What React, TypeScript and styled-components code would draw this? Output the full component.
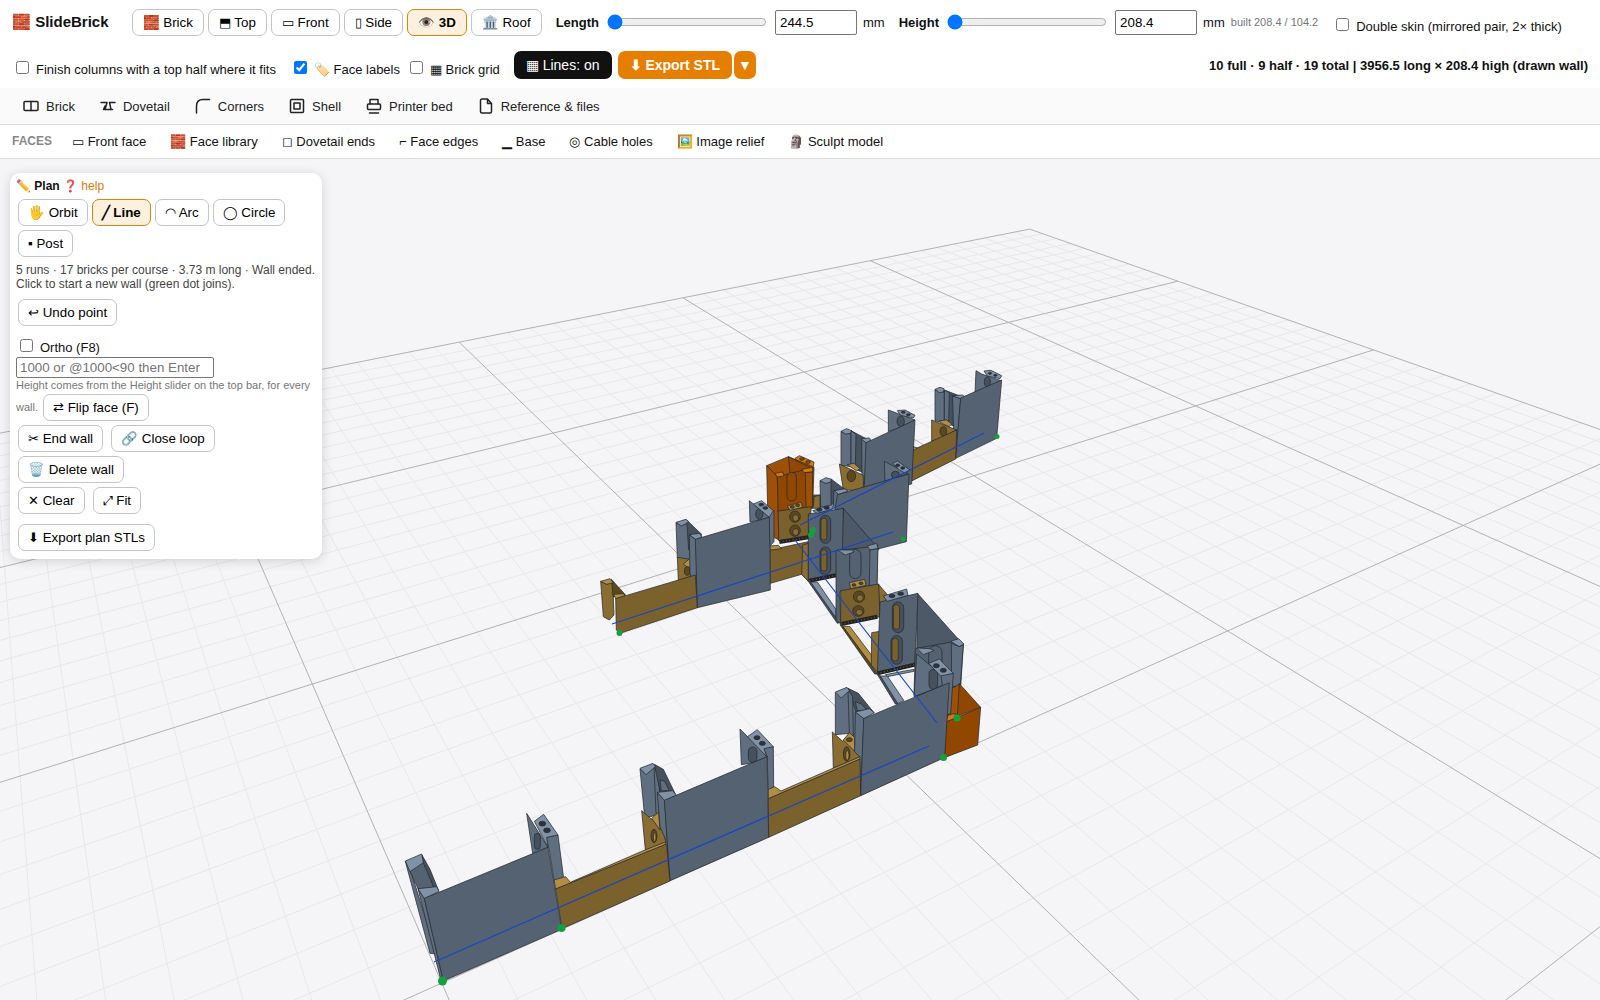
import React from "react";
import styled, { createGlobalStyle, css } from "styled-components";

const GlobalStyle = createGlobalStyle`
  * { box-sizing: border-box; }
  body {
    margin: 0;
    background: #f5f5f7;
    color: #111;
    font: 13px/15px "Liberation Sans", Arial, sans-serif;
  }
`;

const Page = styled.div`
  display: flex;
  flex-direction: column;
  min-height: 100vh;
`;

const Button = styled.button<{ $active?: boolean }>`
  height: 27px;
  padding: 0 9px;
  border: 1px solid #c4c4c4;
  border-radius: 7px;
  background: #fff;
  color: #000;
  font-family: inherit;
  font-size: 13.333px;
  white-space: nowrap;
  ${(p) =>
    p.$active &&
    css`
      border-color: #d9860f;
      background: #fdf0de;
      font-weight: bold;
    `}
`;

const TopBar = styled.header`
  display: flex;
  flex-wrap: wrap;
  align-items: center;
  gap: 15px 14px;
  padding: 8px 12px 9px;
  background: #fff;
  ${Button} { padding: 0 10px; }
`;

const Brand = styled.strong`
  margin-right: 9px;
  font-size: 15px;
  line-height: 20px;
`;

const Group = styled.div<{ $gap?: number }>`
  display: flex;
  align-items: center;
  gap: ${(p) => p.$gap ?? 6}px;
`;

const SolidButton = styled.button<{ $tone: string; $bold?: boolean; $narrow?: boolean }>`
  height: 28px;
  padding: 0 ${(p) => (p.$narrow ? 4 : 12)}px;
  border: 0;
  border-radius: 7px;
  background: ${(p) => p.$tone};
  color: #fff;
  font-family: inherit;
  font-size: 14px;
  font-weight: ${(p) => (p.$bold ? "bold" : "normal")};
  white-space: nowrap;
`;

const FieldLabel = styled.label`
  font-weight: bold;
`;

const Range = styled.input`
  width: 160px;
  height: 16px;
  margin: 0 2px;
`;

const NumberBox = styled.input`
  width: 82px;
  height: 25px;
  padding: 0 4px;
  border: 1px solid #767676;
  border-radius: 2px;
  font-family: inherit;
  font-size: 13.333px;
`;

const Built = styled.span`
  color: #777;
  font-size: 11px;
`;

const Check = styled.label`
  display: flex;
  align-items: flex-start;
  gap: 7px;
  padding-top: 10px;
  line-height: 18px;
  input {
    width: 13px;
    height: 13px;
    margin: 0 0 0 4px;
  }
`;

const Stats = styled.strong`
  margin-left: auto;
`;

const Sections = styled.nav`
  display: flex;
  align-items: center;
  gap: 25px;
  height: 37px;
  padding: 0 23px;
  border-bottom: 1px solid #ddd;
  background: #fafafa;
`;

const NavLink = styled.a`
  display: flex;
  align-items: center;
  gap: 7px;
  color: #222;
  text-decoration: none;
  svg {
    width: 16px;
    height: 16px;
    fill: none;
    stroke: #222;
    stroke-width: 1.5;
    stroke-linejoin: round;
    stroke-linecap: round;
  }
`;

const Faces = styled(Sections)`
  gap: 24px;
  height: 34px;
  padding: 0 12px;
  background: #fff;
  a { color: #111; }
`;

const FacesTitle = styled.span`
  margin-right: -4px;
  color: #888;
  font-size: 12px;
  font-weight: bold;
`;

const Viewport = styled.main`
  position: relative;
  flex: 1;
  overflow: hidden;
`;

const Scene = styled.svg`
  position: absolute;
  inset: 0;
  width: 100%;
  height: 100%;
`;

const Panel = styled.aside`
  position: absolute;
  top: 14px;
  left: 10px;
  width: 312px;
  padding: 6px;
  border-radius: 10px;
  background: #fff;
  box-shadow: 0 2px 12px rgba(0, 0, 0, 0.15);
`;

const PanelTitle = styled.div`
  margin-bottom: 6px;
  font-size: 12px;
  line-height: 14px;
  a { color: #d9790a; text-decoration: none; }
`;

const Tools = styled.div<{ $gap?: number; $after?: number }>`
  display: flex;
  flex-wrap: wrap;
  align-items: center;
  gap: 4px ${(p) => p.$gap ?? 4}px;
  margin-bottom: ${(p) => p.$after ?? 4}px;
  padding: 0 2px;
`;

const Status = styled.p`
  margin: 6px 0 8px;
  color: #444;
  font-size: 12px;
  line-height: 14px;
`;

const Command = styled.input`
  display: block;
  width: 198px;
  height: 21px;
  padding: 1px 3px;
  border: 1px solid #767676;
  border-radius: 2px;
  font-family: inherit;
  font-size: 13.333px;
`;

const Hint = styled.div`
  display: flex;
  flex-direction: column;
  gap: 1px;
  margin-bottom: 4px;
  color: #777;
  font-size: 11px;
  line-height: 15px;
`;

/* Ground plane: maps grid cells (u, v) to the view through the camera. */
const ground = (u: number, v: number): [number, number] => {
  const w = 1 - 0.07505 * u - 0.12089 * v;
  return [(1029.6 - 224.59 * u + 5.91 * v) / w, (229.1 + 12 * u + 18.1 * v) / w];
};
const gridPath = (major: boolean) => {
  let d = "";
  for (let i = 0; i <= 100; i++) {
    if ((i % 10 === 0) !== major) continue;
    const k = i / 10;
    const vEnd = Math.min(8, (0.95 - 0.07505 * k) / 0.12089);
    if (vEnd > 0) {
      const [a, b] = ground(k, 0);
      const [c, e] = ground(k, vEnd);
      d += `M${a.toFixed(1)} ${b.toFixed(1)}L${c.toFixed(1)} ${e.toFixed(1)}`;
    }
    const uEnd = Math.min(10, (0.95 - 0.12089 * k) / 0.07505);
    if (uEnd > 0) {
      const [a, b] = ground(0, k);
      const [c, e] = ground(uEnd, k);
      d += `M${a.toFixed(1)} ${b.toFixed(1)}L${c.toFixed(1)} ${e.toFixed(1)}`;
    }
  }
  return d;
};

const tones = {
  slate: "#556271",
  slateSide: "#5f6f80",
  slateShade: "#4d5966",
  slateLight: "#7f92a7",
  slateDark: "#46515d",
  ochre: "#7b612b",
  ochreSide: "#8b6d31",
  ochreLight: "#b28d42",
  ochreDark: "#5d481d",
  orange: "#914700",
  orangeSide: "#a05004",
  orangeLight: "#d8750c",
  ink: "#2c333b",
};
type Tone = keyof typeof tones;

const Shape = ({ t, p }: { t: Tone; p: string }) => <polygon fill={tones[t]} points={p} />;

const Block = ({ x, y, children }: { x: number; y: number; children: React.ReactNode }) => (
  <g transform={`translate(${x} ${y}) scale(0.33333)`} stroke="#252a30" strokeWidth="2.2" strokeLinejoin="round">
    {children}
  </g>
);

const Hole = ({ t, x, y, rx, ry }: { t: Tone; x: number; y: number; rx: number; ry: number }) => (
  <ellipse cx={x} cy={y} rx={rx} ry={ry} fill={tones[t]} />
);

const Slot = ({ x, y, w, h, t, inner }: { x: number; y: number; w: number; h: number; t: Tone; inner?: Tone }) => (
  <>
    <rect x={x - w / 2} y={y - h / 2} width={w} height={h} rx={w / 2} fill={tones[t]} />
    {inner && <rect x={x - w / 2 + 3} y={y - h / 2 + 8} width={w * 0.55} height={h - 18} rx={w / 4} fill={tones[inner]} />}
  </>
);

const Hatch = ({ x1, y1, x2, y2 }: { x1: number; y1: number; x2: number; y2: number }) => (
  <>
    <line x1={x1} y1={y1} x2={x2} y2={y2} stroke="#1f2123" strokeWidth="12" />
    <line x1={x1} y1={y1} x2={x2} y2={y2} stroke="#66593a" strokeWidth="4" strokeDasharray="3 7" />
  </>
);

const BackWall = () => (
  <Block x={780} y={360}>
    <Shape t="slateSide" p="588,32 605,42 663,62 640,80 585,100" />
    <Hole t="slateDark" x={622} y={66} rx={9} ry={16} />
    <Shape t="slateLight" p="612,33 633,31 665,47 660,56 622,48" />
    <Hole t="ink" x={630} y={40} rx={5} ry={3} />
    <Hole t="ink" x={646} y={46} rx={5} ry={3} />
    <Shape t="slateSide" p="465,88 478,98 495,94 495,190 465,182" />
    <Shape t="slateDark" p="493,90 550,112 525,200 493,185" />
    <Shape t="slateSide" p="493,90 508,98 506,185 493,185" />
    <Shape t="slateLight" p="465,88 480,82 492,86 490,96 478,98" />
    <Shape t="slateSide" p="518,108 542,116 527,295 520,200" />
    <Shape t="slateLight" p="515,107 548,105 555,111 542,116" />
    <Shape t="slate" p="542,114 665,60 650,235 527,295" />
    <Shape t="ochreSide" p="455,180 530,210 480,235 455,243" />
    <Hole t="ochreDark" x={490} y={214} rx={10} ry={14} />
    <Shape t="ochreLight" p="478,182 500,180 515,192 508,200 485,190" />
    <Shape t="ochre" p="398,270 530,210 527,297 395,363" />
    <Shape t="ochreLight" p="400,260 412,264 400,272" />
    <Shape t="slateSide" p="325,150 405,180 378,195 325,215" />
    <Hole t="slateDark" x={362} y={184} rx={11} ry={16} />
    <Shape t="slateLight" p="352,152 375,150 405,166 400,174 362,166" />
    <Hole t="ink" x={370} y={157} rx={6} ry={3} />
    <Hole t="ink" x={385} y={164} rx={6} ry={3} />
    <Shape t="slateSide" p="183,214 197,222 215,216 215,320 183,316" />
    <Shape t="slateDark" p="213,212 270,242 252,340 213,320" />
    <Shape t="slateSide" p="213,212 228,222 226,320 213,320" />
    <Shape t="slateLight" p="183,214 200,206 214,212 212,220 197,222" />
    <Shape t="slateSide" p="245,235 265,246 252,390 246,350" />
    <Shape t="slateLight" p="243,236 268,234 273,241 260,250" />
    <Shape t="slate" p="258,248 405,180 395,372 252,400" />
    <Shape t="ochreSide" p="178,312 250,346 250,392 190,390" />
    <Hole t="ochreDark" x={214} y={348} rx={13} ry={17} />
    <Shape t="ochreLight" p="202,314 222,310 240,326 230,333" />
    <Shape t="ochreSide" p="100,405 122,405 122,445 100,435" />
    <Shape t="slateSide" p="313,304 385,342 350,350 315,364" />
    <Hole t="slateDark" x={346} y={344} rx={12} ry={10} />
    <Shape t="slateLight" p="338,310 352,303 390,330 376,340 358,330" />
    <Hole t="ink" x={353} y={316} rx={6} ry={4} />
    <Hole t="ink" x={368} y={324} rx={6} ry={4} />
    <Shape t="slateSide" p="120,362 137,370 155,362 155,440 122,440" />
    <Shape t="slateDark" p="153,357 200,392 170,440 153,430" />
    <Shape t="slateLight" p="120,362 138,353 155,358 150,367 137,370" />
    <Shape t="slateSide" p="162,390 175,402 170,450 160,440" />
    <Shape t="slate" p="172,404 387,342 379,545 290,568 165,450" />
    <Shape t="slateLight" p="163,392 195,386 204,394 175,403" />
  </Block>
);

const LeftWall = () => (
  <Block x={590} y={440}>
    <Shape t="orangeLight" p="615,55 628,47 672,66 670,80 645,90" />
    <Hole t="orange" x={636} y={57} rx={7} ry={4} />
    <Hole t="orange" x={654} y={66} rx={7} ry={4} />
    <Shape t="orangeSide" p="530,77 595,50 668,80 665,97 562,110" />
    <Shape t="orange" p="595,50 660,82 640,97 600,100" />
    <Shape t="orangeSide" p="530,77 562,110 566,300 553,292 533,205" />
    <Shape t="orange" p="562,110 672,82 668,205 565,216" />
    <Slot t="orange" x={605} y={140} w={28} h={86} />
    <Shape t="orangeLight" p="555,100 578,96 582,108 562,111" />
    <Shape t="orangeLight" p="636,88 668,82 668,96 642,98" />
    <Shape t="orangeSide" p="646,98 668,96 667,204 648,204" />
    <Shape t="ochreSide" p="672,170 690,165 690,205 670,205" />
    <Shape t="ochre" p="565,213 664,200 655,295 566,302" />
    <Shape t="ochreLight" p="592,198 633,187 638,202 600,211" />
    <Hole t="ochreDark" x={607} y={201} rx={6} ry={4} />
    <Hole t="ochreDark" x={623} y={196} rx={6} ry={4} />
    <Hole t="ochreDark" x={615} y={230} rx={16} ry={17} />
    <Hole t="ochreSide" x={617} y={234} rx={9} ry={10} />
    <Hole t="ochreDark" x={615} y={272} rx={16} ry={17} />
    <Hole t="ochreSide" x={617} y={276} rx={9} ry={10} />
    <Shape t="ochre" p="540,330 655,305 655,424 635,403 541,430" />
    <Shape t="ochreLight" p="540,318 565,316 575,326 542,330" />
    <Hatch x1={568} y1={306} x2={655} y2={292} />
    <Shape t="ochreSide" p="638,315 655,310 655,424 635,403" />
    <Shape t="slateSide" p="534,215 552,212 552,305 540,318" />
    <Shape t="slateSide" p="478,182 538,232 510,240 480,246" />
    <Hole t="slateDark" x={508} y={222} rx={11} ry={16} />
    <Shape t="slateLight" p="490,192 515,182 550,212 538,232" />
    <Hole t="ink" x={514} y={194} rx={7} ry={4} />
    <Hole t="ink" x={526} y={204} rx={7} ry={4} />
    <Shape t="slateSide" p="258,247 274,257 295,250 300,360 262,354" />
    <Shape t="slateDark" p="290,240 336,284 318,300 296,330" />
    <Shape t="slateLight" p="258,247 288,238 296,246 274,258" />
    <Shape t="ochreSide" p="262,352 302,358 316,405 265,422" />
    <Shape t="ochreLight" p="280,372 300,355 304,385 290,380" />
    <Hole t="ochreDark" x={292} y={393} rx={9} ry={13} />
    <Shape t="slateSide" p="298,285 318,299 322,502 300,400" />
    <Shape t="slateLight" p="298,284 328,280 336,290 318,299" />
    <Shape t="slate" p="316,298 538,232 541,450 322,503" />
    <Shape t="ochreSide" p="32,424 50,432 68,425 72,525 58,540 40,530" />
    <Shape t="ochreDark" p="64,418 106,464 70,470" />
    <Shape t="ochreLight" p="32,424 60,416 70,428 50,433" />
    <Shape t="ochreLight" p="70,463 100,461 106,466 78,477" />
    <Shape t="ochre" p="77,476 316,405 322,503 90,580 79,570" />
  </Block>
);

const DiagonalWall = () => (
  <Block x={780} y={500}>
    <Shape t="slateShade" p="190,25 297,148 180,240" />
    <Shape t="slate" p="85,42 190,25 186,222 85,242" />
    <Shape t="slateLight" p="98,32 155,14 160,26 112,40" />
    <Hole t="ink" x={118} y={29} rx={8} ry={5} />
    <Hole t="ink" x={140} y={23} rx={8} ry={5} />
    <Slot t="slateDark" inner="ochre" x={136} y={88} w={32} h={84} />
    <Slot t="slateDark" inner="ochre" x={136} y={182} w={32} h={82} />
    <Hatch x1={88} y1={242} x2={168} y2={226} />
    <Shape t="slateLight" p="88,246 112,246 168,328 168,355" />
    <Shape t="slateDark" p="85,244 92,246 178,368 172,370" />
    <Shape t="slate" p="168,152 275,140 293,135 291,260 180,275 182,372 168,360" />
    <Slot t="slate" x={226} y={192} w={34} h={88} />
    <Shape t="slateLight" p="172,150 215,150 222,156 196,165" />
    <Shape t="slateLight" p="262,138 290,130 294,146 270,150" />
    <Shape t="slateSide" p="270,150 294,146 291,256 268,256" />
    <Shape t="ochreSide" p="295,252 352,320 350,370 298,350" />
    <Shape t="ochre" p="182,272 296,252 300,350 182,374" />
    <Shape t="ochreLight" p="208,248 254,238 258,256 212,266" />
    <Hole t="ochreDark" x={222} y={255} rx={6} ry={4} />
    <Hole t="ochreDark" x={243} y={250} rx={6} ry={4} />
    <Hole t="ochreDark" x={237} y={290} rx={17} ry={17} />
    <Hole t="ochreSide" x={240} y={294} rx={10} ry={10} />
    <Hole t="ochreDark" x={235} y={333} rx={17} ry={16} />
    <Hole t="ochreSide" x={238} y={337} rx={10} ry={9} />
    <Hatch x1={184} y1={372} x2={292} y2={350} />
    <Shape t="ochreLight" p="186,378 210,380 278,470 278,500" />
    <Shape t="ochreDark" p="180,374 188,378 294,522 284,522" />
    <Shape t="ochreSide" p="275,398 300,394 296,520 274,496" />
    <Shape t="slateShade" p="412,280 548,432 410,500" />
    <Shape t="slate" p="300,306 414,280 405,488 292,520" />
    <Shape t="slateLight" p="310,288 380,267 384,286 322,304" />
    <Hole t="ink" x={336} y={288} rx={9} ry={5} />
    <Hole t="ink" x={362} y={281} rx={9} ry={5} />
    <Slot t="slateDark" inner="ochre" x={354} y={352} w={34} h={92} />
    <Slot t="slateDark" inner="ochre" x={350} y={450} w={34} h={86} />
    <Hatch x1={292} y1={520} x2={406} y2={494} />
    <Shape t="slateLight" p="298,528 322,528 372,602 350,612" />
    <Shape t="slateDark" p="290,520 300,526 354,612 346,612" />
    <Shape t="slateLight" p="316,524 402,508 402,514 322,530" />
    <Shape t="slate" p="406,446 515,426 550,434 542,560 515,640 402,585" />
    <Slot t="slate" x={466} y={480} w={40} h={86} />
    <Shape t="slateLight" p="410,444 450,446 462,452 430,464" />
    <Shape t="slateLight" p="512,424 536,416 552,432 538,440" />
    <Shape t="slateSide" p="514,430 538,440 550,434 541,558 515,560" />
  </Block>
);

const FrontWall = () => (
  <>
    <Block x={620} y={640}>
      <Shape t="orangeSide" p="988,150 1020,131 1018,235 978,246" />
      <Shape t="orange" p="1018,131 1082,202 1012,228" />
      <Shape t="orangeLight" p="984,226 1005,220 1006,236 978,246" />
      <Shape t="orange" p="978,246 1082,202 1073,315 973,353" />
      <Shape t="slateSide" p="890,42 990,126 940,148 882,170" />
      <Slot t="slateDark" x={940} y={118} w={26} h={60} />
      <Shape t="slateSide" p="963,105 1000,100 992,220 978,225" />
      <Shape t="slateLight" p="926,70 958,57 1000,100 962,108" />
      <Hole t="ink" x={949} y={77} rx={9} ry={6} />
      <Hole t="ink" x={970} y={91} rx={9} ry={6} />
      <Shape t="slateSide" p="646,158 662,174 684,152 710,190 708,335 690,280 646,284" />
      <Shape t="slateDark" p="684,145 715,160 762,218 712,225" />
      <Shape t="slateSide" p="706,185 724,192 742,212 712,212" />
      <Shape t="slateSide" p="684,150 698,170 700,290 688,280" />
      <Shape t="slateLight" p="646,156 681,142 688,152 664,174" />
      <Shape t="ochreSide" p="637,276 668,304 688,280 706,310 720,352 640,384" />
      <Shape t="ochreLight" p="670,300 688,278 704,292 705,335" />
      <Hole t="ochreDark" x={688} y={299} rx={9} ry={6} />
      <Hole t="ochreDark" x={680} y={342} rx={10} ry={22} />
      <Hole t="ochreLight" x={682} y={346} rx={5} ry={14} />
      <Shape t="slateSide" p="706,216 732,236 722,467 718,350 704,335" />
      <Shape t="slateLight" p="706,216 748,206 763,218 732,236" />
      <Shape t="slate" p="731,236 988,128 974,352 722,467" />
      <Shape t="slateSide" p="430,324 460,320 461,443 445,450 441,348" />
      <Shape t="slateSide" p="360,267 442,350 400,368 364,374" />
      <Slot t="slateDark" x={398} y={344} w={26} h={46} />
      <Shape t="slateLight" p="382,290 412,269 460,320 432,326 440,350" />
      <Hole t="ink" x={411} y={293} rx={9} ry={6} />
      <Hole t="ink" x={427} y={310} rx={9} ry={6} />
      <Shape t="ochreLight" p="445,448 464,440 483,453 636,386 720,350 720,358 445,477" />
      <Shape t="ochre" p="445,476 720,357 722,467 446,592" />
      <Shape t="slateSide" p="60,387 78,402 102,378 120,410 122,520 92,530 74,530" />
      <Shape t="slateSide" p="102,378 116,398 122,520 108,520" />
      <Shape t="slateDark" p="103,373 130,388 166,462 122,462" />
      <Shape t="slateSide" p="120,420 134,424 148,452 124,452" />
      <Shape t="slateLight" p="60,385 99,370 106,380 78,404" />
      <Shape t="ochreSide" p="65,512 95,538 116,518 130,570 138,610 76,630" />
      <Shape t="ochreLight" p="95,535 116,516 120,570" />
      <Hole t="ochreDark" x={102} y={588} rx={9} ry={20} />
      <Hole t="ochreLight" x={104} y={592} rx={4} ry={12} />
      <Shape t="slateSide" p="112,457 134,481 150,722 140,606 120,560" />
      <Shape t="slateLight" p="112,457 158,452 169,466 134,482" />
      <Shape t="slate" p="133,481 441,350 446,592 150,722" />
    </Block>
    <Block x={380} y={700}>
      <Shape t="slateSide" p="498,412 534,405 551,535 523,545 508,450" />
      <Shape t="slateSide" p="440,340 504,442 480,450 458,460" />
      <Slot t="slateDark" x={472} y={424} w={18} h={48} />
      <Shape t="slateLight" p="463,364 491,343 534,405 500,412 504,442" />
      <Hole t="ink" x={487} y={371} rx={10} ry={7} />
      <Hole t="ink" x={501} y={391} rx={10} ry={7} />
      <Shape t="ochreLight" p="522,540 557,530 571,547 795,450 856,426 858,434 527,568" />
      <Shape t="ochre" p="527,567 859,432 870,543 546,686" />
      <Shape t="slateSide" p="76,484 92,512 170,762 150,760" />
      <Shape t="slate" p="90,514 130,488 165,562 116,570" />
      <Shape t="slateDark" p="126,465 150,508 176,572 160,560 130,488" />
      <Shape t="slateLight" p="76,483 125,462 130,488 90,515" />
      <Shape t="slateSide" p="114,566 133,595 190,843 182,838" />
      <Shape t="slateLight" p="114,566 170,560 177,574 133,596" />
      <Shape t="slate" p="133,595 504,442 545,688 190,843" />
    </Block>
  </>
);

const planLines = [
  [434, 962, 929, 746],
  [795, 540, 937, 723],
  [612, 624, 893, 532],
  [800, 525, 984, 433],
];
const joints = [
  [442.5, 981, 4.5], [561.5, 928, 4], [619.5, 633, 3], [813, 530, 3], [811, 535, 3],
  [903, 539, 2.5], [997, 436.5, 2.5], [957, 718, 3.5], [943.5, 757.5, 3.5],
];

const sections: { label: string; icon: React.ReactNode }[] = [
  { label: "Brick", icon: <><rect x="1" y="3.5" width="14" height="9" rx="1" /><path d="M8 3.5v9" /></> },
  { label: "Dovetail", icon: <path d="M1 4.5h6L5 11.500h6L9.500 4.500H15M5 11.500H3.500L5 8M11 11.500h1.500" /> },
  { label: "Corners", icon: <path d="M1.500 15V8q0-6.500 6.500-6.500h6.500" /> },
  { label: "Shell", icon: <><rect x="1.500" y="1.500" width="13" height="13" rx="1" /><rect x="5" y="5" width="6" height="6" /></> },
  { label: "Printer bed", icon: <><path d="M4 6V1.500h8V6M3.500 15h9" /><rect x="1.500" y="6" width="13" height="5.500" rx="1" /></> },
  { label: "Reference & files", icon: <path d="M9.500 1H4a1.500 1.500 0 0 0-1.500 1.500v11A1.500 1.500 0 0 0 4 15h8a1.500 1.500 0 0 0 1.500-1.500V5.500zM9.500 1v4.500h4" /> },
];

const faceLinks = [
  "▭ Front face", "🧱 Face library", "◻ Dovetail ends", "⌐ Face edges",
  "▁ Base", "◎ Cable holes", "🖼️ Image relief", "🗿 Sculpt model",
];

const views = ["🧱 Brick", "⬒ Top", "▭ Front", "▯ Side", "👁️ 3D", "🏛️ Roof"];
const tools = ["🖐️ Orbit", "╱ Line", "◠ Arc", "◯ Circle", "▪ Post"];

export default function App() {
  return (
    <Page>
      <GlobalStyle />
      <TopBar>
        <Brand>🧱 SlideBrick</Brand>
        <Group $gap={4}>
          {views.map((v) => (
            <Button key={v} $active={v.endsWith("3D")}>{v}</Button>
          ))}
        </Group>
        <Group>
          <FieldLabel htmlFor="length">Length</FieldLabel>
          <Range id="length" type="range" min={244} max={2000} defaultValue={244} />
          <NumberBox aria-label="Length in mm" defaultValue="244.5" />
          <span>mm</span>
        </Group>
        <Group>
          <FieldLabel htmlFor="height">Height</FieldLabel>
          <Range id="height" type="range" min={208} max={2000} defaultValue={208} />
          <NumberBox aria-label="Height in mm" defaultValue="208.4" />
          <span>mm</span>
          <Built>built 208.4 / 104.2</Built>
        </Group>
        <Check><input type="checkbox" />Double skin (mirrored pair, 2× thick)</Check>
        <Check><input type="checkbox" />Finish columns with a top half where it fits</Check>
        <Group>
          <Check><input type="checkbox" defaultChecked />🏷️ Face labels</Check>
          <Check><input type="checkbox" />▦ Brick grid</Check>
        </Group>
        <Group>
          <SolidButton $tone="#111">▦ Lines: on</SolidButton>
          <Group $gap={2}>
            <SolidButton $tone="#e67e00" $bold>⬇ Export STL</SolidButton>
            <SolidButton $tone="#e67e00" $narrow aria-label="Export options">▼</SolidButton>
          </Group>
        </Group>
        <Stats>10 full · 9 half · 19 total | 3956.5 long × 208.4 high (drawn wall)</Stats>
      </TopBar>
      <Sections>
        {sections.map((s) => (
          <NavLink href="#" key={s.label}>
            <svg viewBox="0 0 16 16" aria-hidden="true">{s.icon}</svg>
            {s.label}
          </NavLink>
        ))}
      </Sections>
      <Faces>
        <FacesTitle>FACES</FacesTitle>
        {faceLinks.map((f) => (
          <NavLink href="#" key={f}>{f}</NavLink>
        ))}
      </Faces>
      <Viewport>
        <Scene viewBox="0 159 1600 841" preserveAspectRatio="xMidYMin slice" aria-label="3D view of the wall plan">
          <path d={gridPath(false)} stroke="#e8e8ea" fill="none" />
          <path d={gridPath(true)} stroke="#b2b2b5" fill="none" />
          <BackWall />
          <LeftWall />
          <DiagonalWall />
          <FrontWall />
          {planLines.map(([a, b, c, d]) => (
            <line key={a} x1={a} y1={b} x2={c} y2={d} stroke="#1746c4" strokeWidth="1.2" />
          ))}
          {joints.map(([x, y, r]) => (
            <circle key={x} cx={x} cy={y} r={r} fill="#14a13c" />
          ))}
        </Scene>
        <Panel>
          <PanelTitle>✏️ <strong>Plan</strong> <a href="#">❓ help</a></PanelTitle>
          <Tools>
            {tools.map((t) => (
              <Button key={t} $active={t.endsWith("Line")}>{t}</Button>
            ))}
          </Tools>
          <Status>
            5 runs · 17 bricks per course · 3.73 m long · Wall ended. Click to start a new wall (green dot joins).
          </Status>
          <Tools $after={3}><Button>↩ Undo point</Button></Tools>
          <Check><input type="checkbox" />Ortho (F8)</Check>
          <Command aria-label="Point coordinates" placeholder="1000 or @1000<90 then Enter" />
          <Hint>
            <span>Height comes from the Height slider on the top bar, for every</span>
            <Group $gap={5}>wall. <Button>⇄ Flip face (F)</Button></Group>
          </Hint>
          <Tools $gap={8}>
            <Button>✂ End wall</Button>
            <Button>🔗 Close loop</Button>
            <Button>🗑️ Delete wall</Button>
          </Tools>
          <Tools $gap={8} $after={10}>
            <Button>✕ Clear</Button>
            <Button>⤢ Fit</Button>
          </Tools>
          <Tools $after={2}><Button>⬇ Export plan STLs</Button></Tools>
        </Panel>
      </Viewport>
    </Page>
  );
}
